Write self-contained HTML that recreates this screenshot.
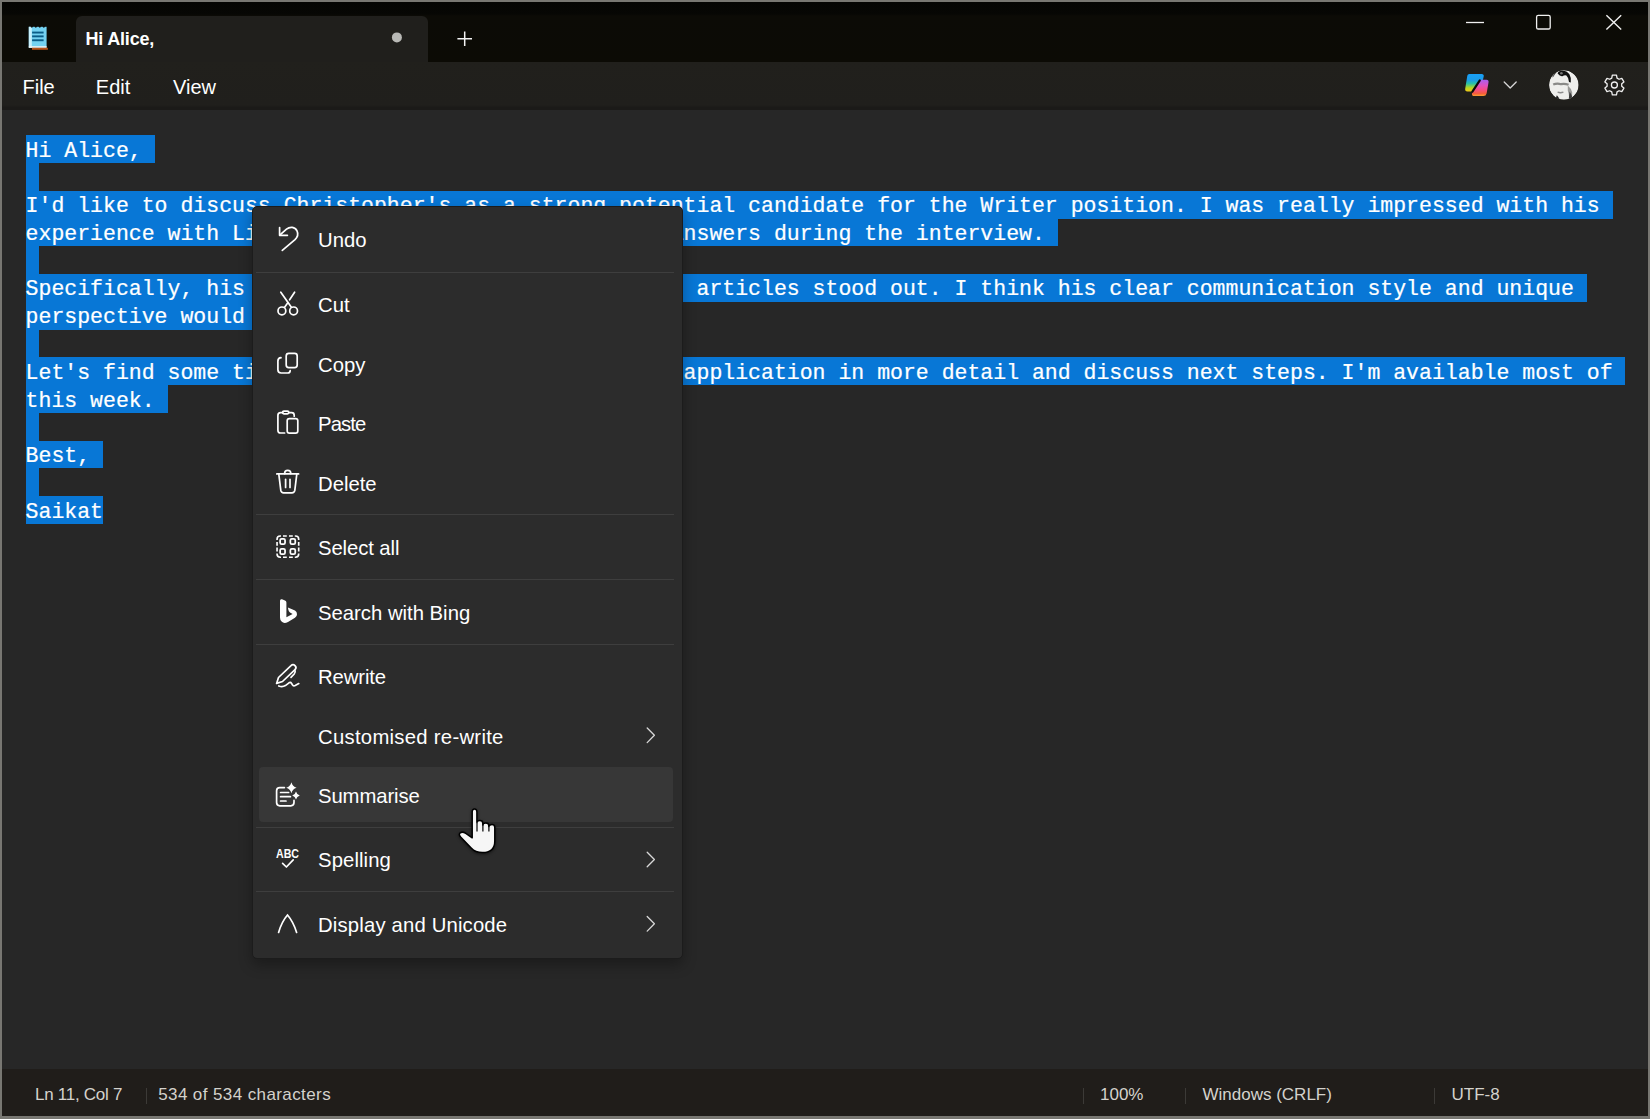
<!DOCTYPE html><html><head><meta charset="utf-8"><style>
*{margin:0;padding:0;box-sizing:border-box}
html,body{width:1650px;height:1119px;overflow:hidden;background:#787772}
body{position:relative;font-family:"Liberation Sans",sans-serif}
#win{position:absolute;left:2px;top:2px;width:1646px;height:1114px;background:#272727}
#title{position:absolute;left:2px;top:2px;width:1646px;height:60px;background:linear-gradient(#050503 0,#070704 12px,#0c0b06 14px,#0c0b05 100%)}
#tab{position:absolute;left:75.5px;top:15.8px;width:352.5px;height:46.5px;background:#201f1c;border-radius:6px 6px 0 0}
#tabtitle{position:absolute;left:85.5px;font-size:18px;line-height:18px;font-weight:bold;color:#fff;letter-spacing:-0.2px}
#menubar{position:absolute;left:2px;top:62px;width:1646px;height:48px;background:linear-gradient(#21201c 0,#201f1c 43px,#1b1a18 45.5px,#1b1a18 48px)}
.mb{position:absolute;font-size:20px;line-height:20px;color:#fff}
#editor{position:absolute;left:2px;top:110px;width:1646px;height:959px;background:#272727}
#status{position:absolute;left:2px;top:1069px;width:1646px;height:47px;background:#201d1a}
.st{position:absolute;font-size:17px;line-height:17px;color:#d4d2cc}
.ssep{position:absolute;top:1088px;width:1px;height:16px;background:#3c3a37}
.ln{position:absolute;height:27.76px;font-family:"Liberation Mono",monospace;font-size:21.5px;line-height:27.76px;color:#fff;white-space:pre;-webkit-text-stroke:0.22px #fff}
.ln span{display:inline-block;height:27.76px;padding-top:2.4px;vertical-align:top;background:#0877d6}

#menu{position:absolute;left:251.6px;top:206.3px;width:431px;height:752.5px;background:#2c2c2c;border:1.5px solid #1c1c1c;border-radius:5px;box-shadow:0 6px 14px rgba(0,0,0,.30)}
#hover{position:absolute;left:259px;top:767.3px;width:413.5px;height:54.5px;background:#373737;border-radius:4px}
.sep{position:absolute;left:256px;width:418px;height:1.3px;background:#3e3e3e}
.mi{position:absolute;left:318px;font-size:20.3px;line-height:20.3px;color:#fff}
#icons{position:absolute;left:0;top:0}
#chrome{position:absolute;left:0;top:0}
#cursor{position:absolute;left:450px;top:795px}
</style></head><body>
<div id="win"></div><div id="title"></div><div id="tab"></div>
<div id="tabtitle" style="top:29.96px">Hi Alice,</div>
<div id="menubar"></div>
<div class="mb" style="left:22.5px;top:77.07px">File</div>
<div class="mb" style="left:95.8px;top:77.07px">Edit</div>
<div class="mb" style="left:173.0px;top:77.07px">View</div>
<div id="editor"></div>
<div class="ln" style="top:135.30px;left:25.6px"><span>Hi Alice, </span></div>
<div class="ln" style="top:163.06px;left:25.6px"><span> </span></div>
<div class="ln" style="top:190.82px;left:25.6px"><span>I'd like to discuss Christopher's as a strong potential candidate for the Writer position. I was really impressed with his </span></div>
<div class="ln" style="top:218.58px;left:25.6px"><span>experience with LinkedIn writing and his thoughtfuanswers during the interview. </span></div>
<div class="ln" style="top:246.34px;left:25.6px"><span> </span></div>
<div class="ln" style="top:274.10px;left:25.6px"><span>Specifically, his work on several published Linkedn articles stood out. I think his clear communication style and unique </span></div>
<div class="ln" style="top:301.86px;left:25.6px"><span>perspective would be a great asset to our team. </span></div>
<div class="ln" style="top:329.62px;left:25.6px"><span> </span></div>
<div class="ln" style="top:357.38px;left:25.6px"><span>Let's find some time to review his portfolio and   application in more detail and discuss next steps. I'm available most of </span></div>
<div class="ln" style="top:385.14px;left:25.6px"><span>this week. </span></div>
<div class="ln" style="top:412.90px;left:25.6px"><span> </span></div>
<div class="ln" style="top:440.66px;left:25.6px"><span>Best, </span></div>
<div class="ln" style="top:468.42px;left:25.6px"><span> </span></div>
<div class="ln" style="top:496.18px;left:25.6px"><span>Saikat</span></div>
<div id="status"></div>
<div class="st" style="left:35.0px;top:1085.81px;letter-spacing:-0.27px">Ln 11, Col 7</div>
<div class="st" style="left:158.2px;top:1085.81px;letter-spacing:0.40px">534 of 534 characters</div>
<div class="st" style="left:1100.0px;top:1085.81px;letter-spacing:0.00px">100%</div>
<div class="st" style="left:1202.5px;top:1085.81px;letter-spacing:0.00px">Windows (CRLF)</div>
<div class="st" style="left:1451.5px;top:1085.81px;letter-spacing:0.00px">UTF-8</div>
<div class="ssep" style="left:146px"></div>
<div class="ssep" style="left:1083px"></div>
<div class="ssep" style="left:1185px"></div>
<div class="ssep" style="left:1434px"></div>
<svg id="chrome" width="1650" height="120" viewBox="0 0 1650 120">
<defs><linearGradient id="cpL" x1="0" y1="0" x2="0" y2="1"><stop offset="0" stop-color="#18a0f8"/><stop offset="0.35" stop-color="#1c9ce8"/><stop offset="0.55" stop-color="#28c0a8"/><stop offset="0.8" stop-color="#b8d820"/><stop offset="1" stop-color="#f0c818"/></linearGradient><linearGradient id="cpR" x1="0" y1="0" x2="0" y2="1"><stop offset="0" stop-color="#a860f0"/><stop offset="0.35" stop-color="#e050c0"/><stop offset="0.6" stop-color="#f44c88"/><stop offset="0.85" stop-color="#f45c3c"/><stop offset="1" stop-color="#f8a030"/></linearGradient></defs>
<rect x="28.8" y="26.8" width="17.8" height="20.8" fill="#74d2f2"/>
<rect x="28.8" y="26.8" width="3" height="20.8" fill="#c8f0fc"/>
<rect x="32.1" y="31.6" width="11.5" height="1.9" fill="#0b5d88"/>
<rect x="32.1" y="35.4" width="11.5" height="1.9" fill="#0b5d88"/>
<rect x="32.1" y="39.3" width="11.5" height="1.9" fill="#0b5d88"/>
<circle cx="31.8" cy="26.6" r="1.1" fill="#0b0a06"/>
<circle cx="35.8" cy="26.6" r="1.1" fill="#0b0a06"/>
<circle cx="39.8" cy="26.6" r="1.1" fill="#0b0a06"/>
<circle cx="43.8" cy="26.6" r="1.1" fill="#0b0a06"/>
<rect x="28.8" y="46.2" width="17.8" height="1.6" fill="#f2f2f2"/>
<rect x="32" y="47.8" width="15.9" height="2" fill="#b4521c"/>
<circle cx="396.9" cy="37.4" r="5" fill="#b9b9b6"/>
<path d="M457.4 38.8 H472 M464.7 31.5 V46.1" stroke="#f4f4f4" stroke-width="1.5" fill="none"/>
<path d="M1466 22.5 H1484" stroke="#f0f0f0" stroke-width="1.3" fill="none"/>
<rect x="1536.6" y="15.4" width="13.6" height="13.6" rx="1.6" stroke="#f0f0f0" stroke-width="1.3" fill="none"/>
<path d="M1606.4 15.2 L1621.2 29.6 M1621.2 15.2 L1606.4 29.6" stroke="#f0f0f0" stroke-width="1.4" fill="none"/>
<path d="M1469.4 73.9 H1481.6 Q1484.2 73.9 1483.7 76.4 L1483 79.6 L1476.2 91.4 H1467.4 Q1464.8 91.4 1465.2 88.8 L1467.3 75.8 Q1467.6 73.9 1469.4 73.9 Z" fill="url(#cpL)"/>
<path d="M1481.6 79.8 H1486.4 Q1489.0 79.8 1488.5 82.4 L1486.6 93.4 Q1486.0 96.0 1483.4 96.0 H1474.4 Q1471.6 96.0 1472.0 93.4 L1472.6 91.0 L1479.6 80.6 Q1480.2 79.8 1481.6 79.8 Z" fill="url(#cpR)"/>
<path d="M1479.8 80.4 L1472.4 91.6" stroke="#0a0a0a" stroke-width="2.2" stroke-linecap="round"/>
<path d="M1504.2 82 L1510.2 88 L1516.2 82" stroke="#d6d6d6" stroke-width="1.3" fill="none" stroke-linecap="round" stroke-linejoin="round"/>
<defs><clipPath id="avc"><circle cx="1563.85" cy="85.05" r="14.8"/></clipPath></defs>
<g clip-path="url(#avc)">
<circle cx="1563.85" cy="85.05" r="14.8" fill="#eeeeec"/>
<path d="M1557.6 73.6 Q1558.4 70.6 1562.0 70.8 Q1566.6 70.6 1569.4 74.2 Q1571.4 77.4 1570.8 82.4 L1569.0 82.0 Q1568.8 77.6 1566.4 75.4 Q1564.6 74.6 1562.4 76.2 Q1560.0 76.6 1557.6 73.6 Z" fill="#111"/>
<circle cx="1561.4" cy="73.2" r="1.3" fill="#777"/>
<path d="M1553.2 84.6 Q1557 82.8 1561 84.2 Q1564.8 83.4 1568.6 84.8" stroke="#8a8a88" stroke-width="2.2" fill="none"/>
<path d="M1552.6 77.2 Q1554.2 74.2 1555.6 73.4" stroke="#444" stroke-width="1" fill="none"/>
<path d="M1557.6 92.2 Q1560.4 93.2 1563.4 92.2" stroke="#8c8c8c" stroke-width="1.4" fill="none"/>
<path d="M1567.8 85.4 Q1571 88 1572.2 92.4 L1571.8 101 L1569.2 101 Q1569.4 94 1567.8 90.4 Z" fill="#9a9a98"/>
<path d="M1556.8 95.2 Q1559.0 97.4 1560.4 100.6 L1555.0 100.6 Z" fill="#1a1a1a"/>
<path d="M1569.6 91.6 Q1572.6 95.4 1572.8 100.6 L1568.6 100.6 Z" fill="#3a3a3a"/>
</g>
<path d="M1611.75 78.09 L1612.32 75.22 L1616.48 75.22 L1617.05 78.09 L1619.06 79.25 L1621.83 78.31 L1623.91 81.91 L1621.71 83.84 L1621.71 86.16 L1623.91 88.09 L1621.83 91.69 L1619.06 90.75 L1617.05 91.91 L1616.48 94.78 L1612.32 94.78 L1611.75 91.91 L1609.74 90.75 L1606.97 91.69 L1604.89 88.09 L1607.09 86.16 L1607.09 83.84 L1604.89 81.91 L1606.97 78.31 L1609.74 79.25 Z" stroke="#f0f0f0" stroke-width="1.3" fill="none" stroke-linejoin="round"/>
<circle cx="1614.4" cy="85.0" r="3" stroke="#f0f0f0" stroke-width="1.3" fill="none"/>
</svg>
<div id="menu"></div>
<div id="hover"></div>
<div class="sep" style="top:271.5px"></div>
<div class="sep" style="top:514.1px"></div>
<div class="sep" style="top:578.5px"></div>
<div class="sep" style="top:643.5px"></div>
<div class="sep" style="top:826.8px"></div>
<div class="sep" style="top:891.1px"></div>
<div class="mi" style="top:230.32px;letter-spacing:0.00px">Undo</div>
<div class="mi" style="top:294.82px;letter-spacing:0.00px">Cut</div>
<div class="mi" style="top:354.62px;letter-spacing:0.00px">Copy</div>
<div class="mi" style="top:414.22px;letter-spacing:-0.90px">Paste</div>
<div class="mi" style="top:474.12px;letter-spacing:0.00px">Delete</div>
<div class="mi" style="top:538.42px;letter-spacing:-0.10px">Select all</div>
<div class="mi" style="top:602.82px;letter-spacing:0.00px">Search with Bing</div>
<div class="mi" style="top:666.82px;letter-spacing:-0.10px">Rewrite</div>
<div class="mi" style="top:726.52px;letter-spacing:0.28px">Customised re-write</div>
<div class="mi" style="top:786.22px;letter-spacing:-0.10px">Summarise</div>
<div class="mi" style="top:850.02px;letter-spacing:0.10px">Spelling</div>
<div class="mi" style="top:915.12px;letter-spacing:0.17px">Display and Unicode</div>
<svg id="icons" width="1650" height="1119" viewBox="0 0 1650 1119">
<g fill="none" stroke="#fff" stroke-width="1.7" stroke-linecap="round" stroke-linejoin="round"><path d="M279.6 227.6 V235.3 H287.4"/><path d="M280.3 234.6 L286.5 229.2 C290 226.3 295 226.8 297 230.8 C298.3 233.6 297.6 237 295 239.6 L282.3 250.4"/></g>
<g fill="none" stroke="#fff" stroke-width="1.7" stroke-linecap="round" stroke-linejoin="round"><path d="M280.8 292.2 L291.2 307"/><path d="M294.6 292.2 L289.6 299.8"/><path d="M288.0 302.6 L284.6 307.2"/><circle cx="281.9" cy="310.9" r="3.9"/><circle cx="293.6" cy="310.9" r="3.9"/></g>
<g fill="none" stroke="#fff" stroke-width="1.7" stroke-linecap="round" stroke-linejoin="round"><rect x="286.2" y="353.4" width="11" height="14.2" rx="2.6"/><path d="M281.0 357.7 Q277.9 357.9 277.9 361.0 V369.8 Q277.9 373 281.1 373 H287.6 Q290 373 290.2 370.6"/></g>
<g fill="none" stroke="#fff" stroke-width="1.7" stroke-linecap="round" stroke-linejoin="round"><path d="M282.6 412.6 H280.6 Q277.9 412.6 277.9 415.4 V430.2 Q277.9 433 280.6 433 H284.6"/><path d="M288.8 412.6 H291.6 Q294.2 412.6 294.2 415.2 V416.2"/><rect x="282.6" y="411.2" width="6.2" height="2.6" rx="1.3"/><rect x="287.2" y="418.6" width="10.6" height="14.6" rx="2.2"/></g>
<g fill="none" stroke="#fff" stroke-width="1.7" stroke-linecap="round" stroke-linejoin="round"><path d="M276.8 473.9 H298.6"/><path d="M284.6 473.6 Q284.6 470.4 287.7 470.4 Q290.8 470.4 290.8 473.6"/><path d="M278.8 474.2 L280.8 490.4 Q281.2 492.8 283.6 492.8 H292.0 Q294.4 492.8 294.8 490.4 L296.8 474.2"/><path d="M285.6 479.4 V487.4"/><path d="M290.0 479.4 V487.4"/></g>
<path fill="none" stroke="#fff" stroke-width="1.65" stroke-linecap="butt" stroke-linejoin="round" d="M277.05 540.0 V539.2 Q277.05 536.0 280.2 536.0 H281.0 M283.0 536.0 H286.8 M289.0 536.0 H292.8 M294.8 536.0 H295.5 Q298.7 536.0 298.7 539.2 V540.0 M298.7 542.0 V545.8 M298.7 547.6 V551.4 M298.7 553.4 V554.0 Q298.7 557.2 295.5 557.2 H294.8 M292.8 557.2 H289.0 M286.8 557.2 H283.0 M281.0 557.2 H280.2 Q277.05 557.2 277.05 554.0 V553.4 M277.05 551.4 V547.6 M277.05 545.8 V542.0"/>
<g fill="none" stroke="#fff" stroke-width="1.75"><rect x="280.15" y="538.85" width="4.9" height="5.3" rx="1.5"/><rect x="290.35" y="538.85" width="4.9" height="5.3" rx="1.5"/><rect x="280.15" y="548.85" width="4.9" height="5.3" rx="1.5"/><rect x="290.35" y="548.85" width="4.9" height="5.3" rx="1.5"/></g>
<path fill="#fff" d="M280.0 600.8 Q280.0 598.8 282.0 599.3 L285.0 600.4 Q286.4 601.0 286.4 602.6 L286.4 617.2 L292.6 614.0 L290.0 612.6 Q288.6 611.6 288.3 609.6 L287.9 607.4 L295.0 610.6 Q297.0 611.6 297.0 614.2 Q297.0 616.6 295.0 617.8 L288.0 622.0 Q284.0 624.2 281.6 621.6 Q280.0 620.0 280.0 617.4 Z"/>
<g fill="none" stroke="#fff" stroke-width="1.7" stroke-linecap="round" stroke-linejoin="round"><path d="M276.6 683.4 L278.5 677.5 L291.0 665.6 Q293.0 663.6 295.0 665.6 Q297.0 667.6 295.0 669.6 L282.5 681.5 Z"/><path d="M294.9 670.0 Q295.8 672.2 294.2 674.0 L291.0 677.4"/><path d="M278.8 686.0 Q282.4 687.4 285.4 685.6 L289.0 682.8 Q290.4 681.8 291.4 683.2 L292.6 685.0 Q293.6 686.4 295.2 685.6 L298.8 683.6"/></g>
<g fill="none" stroke="#fff" stroke-width="1.7" stroke-linecap="round" stroke-linejoin="round"><path d="M284.4 787.6 H279.8 Q276.6 787.6 276.6 790.8 V802.6 Q276.6 805.8 279.8 805.8 H290.8 Q294.0 805.8 294.0 802.6 V800.4"/><path d="M280.6 792.5 H288.6"/><path d="M280.6 796.7 H290.4"/><path d="M280.6 801.0 H286.0"/></g>
<path fill="#fff" d="M291.4 782.2 Q292.5 786.6 296.6 787.7 Q292.5 788.8 291.4 793.2 Q290.3 788.8 286.2 787.7 Q290.3 786.6 291.4 782.2 Z"/>
<path fill="#fff" d="M296.0 791.4 Q296.8 794.6 299.8 795.4 Q296.8 796.2 296.0 799.4 Q295.2 796.2 292.2 795.4 Q295.2 794.6 296.0 791.4 Z"/>
<text x="276.0" y="857.8" font-family="Liberation Sans" font-weight="bold" font-size="12.6" fill="#fff" textLength="23" lengthAdjust="spacingAndGlyphs">ABC</text>
<path fill="none" stroke="#fff" stroke-width="1.7" stroke-linecap="round" stroke-linejoin="round" d="M282.6 863.4 L286.4 867.0 L293.2 859.8"/>
<path fill="none" stroke="#fff" stroke-width="1.7" stroke-linecap="round" stroke-linejoin="miter" d="M278.6 932.4 Q281.8 921.6 287.5 915.0 Q293.2 921.6 296.6 932.4"/>
<path fill="none" stroke="#d8d8d8" stroke-width="1.3" stroke-linecap="round" stroke-linejoin="round" d="M647.2 728.0 L654.4 735.3 L647.2 742.6"/>
<path fill="none" stroke="#d8d8d8" stroke-width="1.3" stroke-linecap="round" stroke-linejoin="round" d="M647.2 852.2 L654.4 859.5 L647.2 866.8"/>
<path fill="none" stroke="#d8d8d8" stroke-width="1.3" stroke-linecap="round" stroke-linejoin="round" d="M647.2 916.5 L654.4 923.8 L647.2 931.1"/>
</svg>
<svg id="cursor" width="60" height="70" viewBox="450 795 60 70"><path d="M472.2 811.8 Q472.2 809.0 474.55 809.0 Q476.9 809.0 476.9 811.8 V822.6 Q477.3 820.6 479.9 820.6 Q482.8 820.6 482.8 823.2 V825.0 Q483.2 823.0 485.9 823.0 Q488.8 823.0 488.8 825.6 V826.6 Q489.3 824.4 492.0 824.4 Q494.8 824.4 494.8 827.4 V841.0 Q494.8 852.6 482.4 852.6 Q475.4 852.6 471.2 848.0 L460.6 837.0 Q458.2 834.4 460.2 832.8 Q462.4 831.2 465.8 833.4 L472.2 837.8 Z" fill="#f6f6f6" stroke="#000" stroke-width="1.5" stroke-linejoin="round" style="filter:drop-shadow(0 1px 1.5px rgba(0,0,0,.55))"/><path d="M477.0 823 V831.4 M482.9 825 V831.4 M488.9 826.6 V831.4" stroke="#000" stroke-width="1.2" fill="none"/></svg>
</body></html>
